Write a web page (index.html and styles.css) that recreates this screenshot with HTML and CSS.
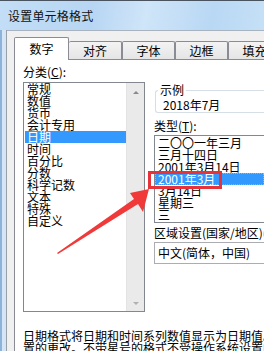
FILE: index.html
```html
<!DOCTYPE html>
<html lang="zh-CN">
<head>
<meta charset="utf-8">
<link rel="stylesheet" href="styles.css">
</head>
<body>
<div class="win">
  <div class="titlebar"><span class="title">设置单元格格式</span></div>
  <div class="main">
    <div class="frame"></div>
    <div class="body">
      <div class="tabs">
        <div class="tab active">数字</div>
        <div class="tab first">对齐</div>
        <div class="tab">字体</div>
        <div class="tab">边框</div>
        <div class="tab">填充</div>
      </div>
      <div class="panel">
        <div class="cols">
          <div class="left">
            <div class="label">分类(<u>C</u>):</div>
            <div class="listbox cat">
              <ul class="items">
                <li>常规</li>
                <li>数值</li>
                <li>货币</li>
                <li>会计专用</li>
                <li class="sel">日期</li>
                <li>时间</li>
                <li>百分比</li>
                <li>分数</li>
                <li>科学记数</li>
                <li>文本</li>
                <li>特殊</li>
                <li>自定义</li>
              </ul>
              <div class="scroll">
                <span class="arr up"></span>
                <span class="arr down"></span>
              </div>
            </div>
          </div>
          <div class="right">
            <fieldset class="sample">
              <legend>示例</legend>
              <div class="sample-val">2018年7月</div>
            </fieldset>
            <div class="label type-label">类型(<u>T</u>):</div>
            <div class="listbox type">
              <ul class="items">
                <li>二〇〇一年三月</li>
                <li>三月十四日</li>
                <li>2001年3月14日</li>
                <li class="sel focus">2001年3月</li>
                <li>3月14日</li>
                <li>星期三</li>
                <li>三</li>
              </ul>
            </div>
            <div class="label region-label">区域设置(国家/地区)(<u>L</u>):</div>
            <div class="combo">中文(简体，中国)</div>
          </div>
        </div>
        <div class="desc">
          <div class="line">日期格式将日期和时间系列数值显示为日期值。以星号(*)开头的日期格式响应操作系统特定的区域日期和时间设</div>
          <div class="line">置的更改。不带星号的格式不受操作系统设置的影响。</div>
        </div>
      </div>
    </div>
  </div>
  <div class="redbox"></div>
  <svg class="arrow" width="264" height="351" viewBox="0 0 264 351">
    <polygon points="57,253 134,199 130,193 149,189 143,212 138,204 58,254" fill="#f03a3a"/>
  </svg>
</div>
</body>
</html>
```

FILE: styles.css
```css
html, body {
  margin: 0;
  padding: 0;
  width: 264px;
  height: 351px;
  overflow: hidden;
  background: #f0f0f0;
  font-family: "Noto Sans CJK SC", "Noto Sans", sans-serif;
  font-size: 12px;
  color: #000;
}

.win {
  position: relative;
  width: 264px;
  height: 351px;
  overflow: hidden;
}

.titlebar {
  height: 29px;
  border-top: 1px solid #4a5360;
  background: linear-gradient(100deg, #c3def6 0%, #b7d6f3 35%, #cfe5f8 55%, #b9d8f4 80%, #c5e0f6 100%);
  display: flex;
  align-items: center;
  padding-left: 8px;
  box-sizing: border-box;
  height: 30px;
}

.title {
  font-size: 12px;
  letter-spacing: 0.2px;
  line-height: 14px;
  color: #111;
}

.main {
  display: flex;
  height: 321px;
}

.frame {
  width: 7px;
  flex: none;
  background: linear-gradient(to right, #8eb2da 0 2px, #d3e5f6 2px 6px, #9aa0a8 6px 7px);
}

.body {
  flex: 1;
  border-top: 1px solid #a9b3bf;
  padding: 6px 0 0 7px;
  display: flex;
  flex-direction: column;
  min-width: 0;
}

.tabs {
  display: flex;
  align-items: flex-end;
  height: 22px;
  position: relative;
  z-index: 2;
}

.tab {
  width: 53px;
  height: 18px;
  box-sizing: border-box;
  flex: none;
  border: 1px solid #898c95;
  border-bottom: none;
  border-left: none;
  background: linear-gradient(#f3f3f3, #e5e5e5);
  text-align: center;
  line-height: 17px;
  border-radius: 2px 2px 0 0;
}

.tab + .tab:not(.first) {
  border-left: 1px solid #898c95;
  margin-left: 0;
}

.tab.active {
  width: 55px;
  height: 23px;
  margin-bottom: -1px;
  border-left: 1px solid #898c95;
  background: #fff;
  line-height: 21px;
}

.panel {
  flex: 1;
  background: #fff;
  border-top: 1px solid #898c95;
  border-left: 1px solid #898c95;
  padding: 5px 0 0 8px;
  min-width: 0;
}

.cols {
  display: flex;
  align-items: flex-start;
}

.label {
  line-height: 14px;
  white-space: nowrap;
}

.label u {
  text-decoration-thickness: 1px;
  text-underline-offset: 1px;
}

.left {
  width: 122px;
  flex: none;
}

.listbox {
  border: 1px solid #828790;
  background: #fff;
  box-sizing: border-box;
}

.cat {
  margin-top: 3px;
  height: 230px;
  display: flex;
}

.items {
  list-style: none;
  margin: 0;
  padding: 0;
  flex: 1;
  min-width: 0;
}

.items li {
  line-height: 12px;
  height: 12px;
  white-space: nowrap;
}

.cat .items li {
  margin-left: 1px;
  padding-left: 2px;
}

.items li.sel {
  background: #3399ff;
  color: #fff;
}

.scroll {
  width: 17px;
  flex: none;
  background: #eaeaea;
  border-left: 1px solid #e3e3e3;
  position: relative;
}

.arr {
  position: absolute;
  left: 6px;
  width: 0;
  height: 0;
  border-left: 3px solid transparent;
  border-right: 3px solid transparent;
}

.arr.up {
  top: 8px;
  border-bottom: 3px solid #8a8a8a;
}

.arr.down {
  bottom: 6px;
  border-top: 3px solid #b0b0b0;
}

.right {
  flex: 1;
  min-width: 0;
  margin-left: 9px;
  padding-top: 19px;
}

.sample {
  margin: 0 0 0 1px;
  padding: 3px 0 1px 2px;
  border: 1px solid #d5dfe5;
  border-right: none;
  border-radius: 3px 0 0 3px;
  min-width: 0;
}

.sample legend {
  padding: 0 2px;
  line-height: 12px;
}

.sample-val {
  padding-left: 5px;
  line-height: 12px;
  height: 12px;
}

.type-label {
  margin-top: 6px;
}

.type {
  margin-top: 2px;
  height: 88px;
  border-right: none;
  padding-top: 1px;
}

.type .items li {
  padding-left: 3px;
}

.type .items li.focus {
  outline: 1px dotted #f5a524;
  outline-offset: -1px;
}

.region-label {
  margin-top: 3px;
}

.combo {
  margin-top: 2px;
  height: 22px;
  box-sizing: border-box;
  border: 1px solid #abadb3;
  border-right: none;
  padding-left: 3px;
  line-height: 20px;
  white-space: nowrap;
}

.desc {
  margin-top: 18px;
}

.desc .line {
  line-height: 12px;
  white-space: nowrap;
}

.redbox {
  position: absolute;
  left: 148px;
  top: 171px;
  width: 74px;
  height: 18px;
  box-sizing: border-box;
  border: 3px solid #e8323a;
  z-index: 5;
}

.arrow {
  position: absolute;
  left: 0;
  top: 0;
  z-index: 6;
  pointer-events: none;
}
```
